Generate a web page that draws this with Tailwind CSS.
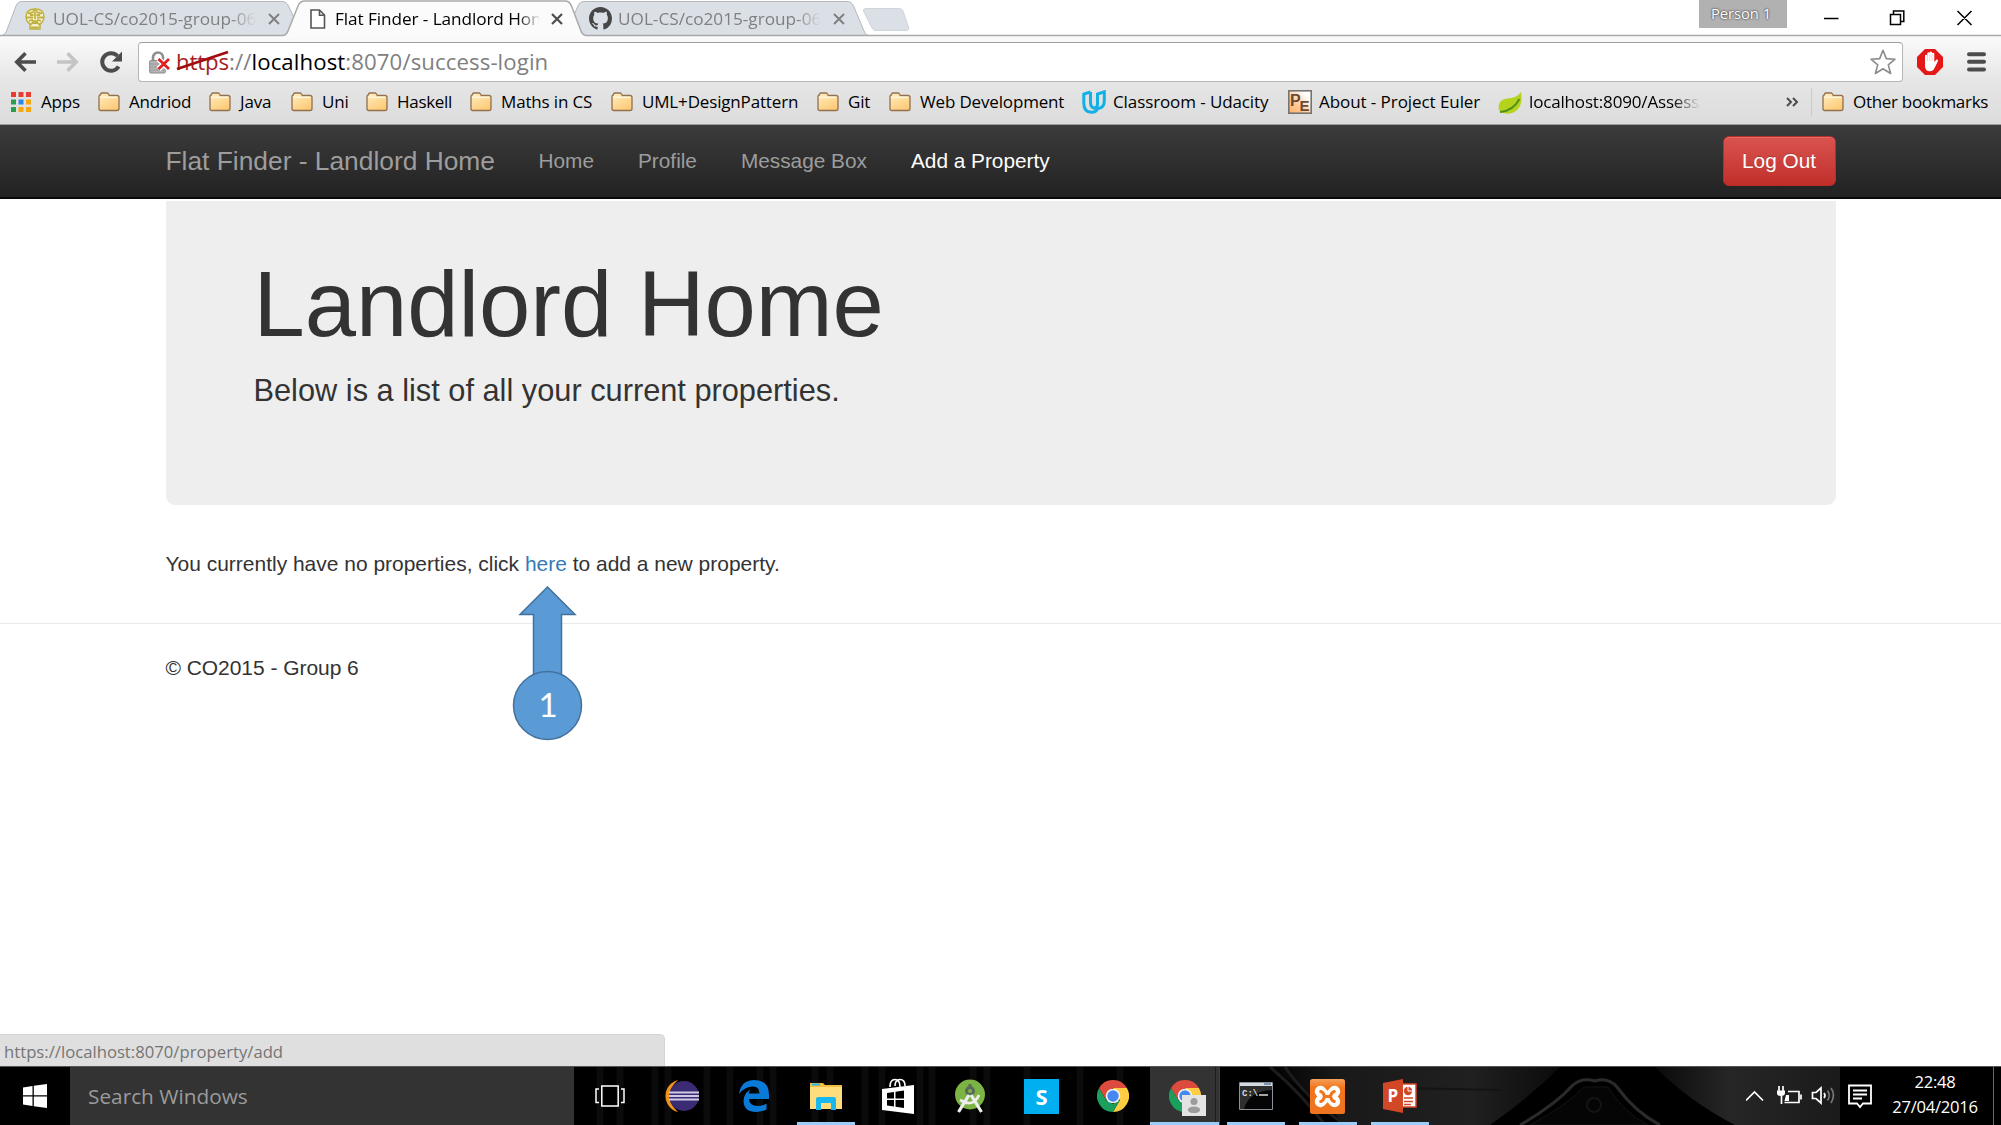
<!DOCTYPE html>
<html lang="en">
<head>
<meta charset="utf-8">
<title>Flat Finder - Landlord Home</title>
<script src="https://cdn.jsdelivr.net/npm/@tailwindcss/browser@4"></script>
</head>
<body class="flex h-[1125px] w-[2001px] flex-col overflow-hidden bg-white font-['Open_Sans',sans-serif] whitespace-nowrap text-black">

<!-- shared symbols -->
<svg class="absolute size-0">
  <linearGradient id="fold" x1="0" y1="0" x2="0.6" y2="1"><stop offset="0" stop-color="#ffefc4"/><stop offset="1" stop-color="#fdcb78"/></linearGradient>
  <linearGradient id="orange" x1="0" y1="0" x2="0" y2="1"><stop offset="0" stop-color="#f5a05a"/><stop offset=".25" stop-color="#f1751c"/><stop offset="1" stop-color="#ee7420"/></linearGradient>
  <linearGradient id="peg" x1="0" y1="1" x2="1" y2="0"><stop offset="0" stop-color="#ffb266"/><stop offset=".35" stop-color="#ffc790"/><stop offset=".8" stop-color="#fff"/></linearGradient>
  <symbol id="folder" viewBox="0 0 22 20">
    <path d="M1 4.500V16.500a2 2 0 0 0 2 2H19a2 2 0 0 0 2-2V5.500a2 2 0 0 0-2-2H11.300L10.300 1.800A1.500 1.500 0 0 0 9 1H4A1.500 1.500 0 0 0 2.600 2L2.300 3Q1 3.300 1 4.500Z" fill="url(#fold)" stroke="#93704d" stroke-width="1.300"/>
    <path d="M2.500 5.300H19.500" stroke="#fff7de" stroke-width="1.400"/>
  </symbol>
  <symbol id="chrome" viewBox="0 0 32 32">
    <path d="M16 8H29.860A16 16 0 0 1 16 32L22.930 20Z" fill="#ffcd40"/>
    <path d="M16 32A16 16 0 0 1 2.140 8L9.070 20 16 24 22.930 20Z" fill="#1a9f5c"/>
    <path d="M2.140 8A16 16 0 0 1 29.860 8H16L9.070 20Z" fill="#dd4b3e"/>
    <circle cx="16" cy="16" r="7.300" fill="#f3f3f3"/><circle cx="16" cy="16" r="5.700" fill="#4688f1"/>
  </symbol>
</svg>

<!-- tab strip -->
<header class="relative flex h-[36px] shrink-0 items-center bg-white text-[17.2px]">
  <svg class="absolute inset-0" width="2001" height="37" viewBox="0 0 2001 37" fill="none">
    <path d="M2 35.500Q5 35 6.500 31L16 6Q17.800 1.500 22 1.500H282Q286.500 1.500 288.500 6L296 22 286 35.500Z" fill="#dbe0e7" stroke="#b4b7bb"/>
    <path d="M582 35.500 573 17 578 6Q579.800 1.500 584 1.500H847Q851.500 1.500 853.500 6L864 31Q865.500 35 868 35.500Z" fill="#dbe0e7" stroke="#b4b7bb"/>
    <path d="M0 35.500H283Q286.500 35 288 31L298 6Q300 1 304.500 1H565Q569.500 1 571.500 6L581 31Q582.500 35 586 35.500H2001V37H0Z" fill="#fbfbfb"/>
    <path d="M0 35.500H283Q286.500 35 288 31L298 6Q300 1 304.500 1H565Q569.500 1 571.500 6L581 31Q582.500 35 586 35.500H2001" stroke="#a9a9a9" stroke-width="1.500"/>
    <path d="M866 8.500H899Q902 8.500 903 11L908.500 27Q909.500 30.500 906 30.500H876Q873 30.500 872 28L863.500 11Q863 8.500 866 8.500Z" fill="#dbe0e7" stroke="#cfd4da"/>
  </svg>
  <div class="relative flex w-[310px] items-center pt-[2px] pl-[25px] text-[#808080]">
    <svg width="20" height="22" viewBox="0 0 20 22" fill="none" stroke="#c0b142"><path d="M10 1Q19 1 19 9 18.500 14 15 16V21H5V16Q1.500 14 1 9 1 1 10 1Z" fill="#f6f1cc" stroke-width="1.500"/><path d="M3 5.500 7.500 4.500 10 1.500 12.500 4.500 17 5.500M1 9.500H8M12 9.500H19M5 7H8.500M11.500 7H15M4 13 7 12 10 15 13 12 16 13M5 17 10 13 15 17M6 19.500H14M10 4V11" stroke-width="1.800"/></svg>
    <span class="ml-2 w-[203px] overflow-hidden [mask-image:linear-gradient(90deg,#000_178px,transparent_203px)]">UOL-CS/co2015-group-06</span>
    <svg class="ml-3" width="12" height="12" viewBox="0 0 12 12" stroke="#808080" stroke-width="2"><path d="M1 1 11 11M11 1 1 11"/></svg>
  </div>
  <div class="relative flex w-[279px] items-center pt-[2px]">
    <svg width="16" height="20" viewBox="0 0 16 20" fill="#fff" stroke="#555" stroke-width="1.600"><path d="M1 1H9.500L14.500 6V19H1ZM9.500 1V6.300H14.500"/></svg>
    <span class="ml-[9px] w-[204px] tracking-[-0.08px] [mask-image:linear-gradient(90deg,#000_182px,transparent_206px)]">Flat Finder - Landlord Hon</span>
    <svg class="ml-[12px]" width="12" height="12" viewBox="0 0 12 12" stroke="#4d4d4d" stroke-width="2.200"><path d="M1 1 11 11M11 1 1 11"/></svg>
  </div>
  <div class="relative flex items-center pt-[2px] text-[#808080]">
    <svg width="23" height="23" viewBox="0 0 16 16" fill="#464646"><path d="M8 0C3.580 0 0 3.580 0 8c0 3.540 2.290 6.530 5.470 7.590.4.070.55-.17.55-.38 0-.19-.01-.82-.01-1.490-2.010.37-2.530-.49-2.690-.94-.09-.23-.48-.94-.82-1.130-.28-.15-.68-.52-.01-.53.63-.01 1.080.58 1.230.82.72 1.210 1.870.87 2.330.66.07-.52.28-.87.51-1.070-1.780-.2-3.640-.89-3.640-3.950 0-.87.31-1.590.82-2.150-.08-.2-.36-1.020.08-2.120 0 0 .67-.21 2.200.82.64-.18 1.320-.27 2-.27s1.360.09 2 .27c1.530-1.040 2.200-.82 2.200-.82.44 1.100.16 1.920.08 2.120.51.56.82 1.270.82 2.150 0 3.070-1.870 3.750-3.650 3.950.29.25.54.73.54 1.480 0 1.070-.01 1.930-.01 2.200 0 .21.15.46.55.38A8.010 8.010 0 0 0 16 8c0-4.420-3.580-8-8-8z"/></svg>
    <span class="ml-[6px] w-[203px] overflow-hidden [mask-image:linear-gradient(90deg,#000_178px,transparent_203px)]">UOL-CS/co2015-group-06</span>
    <svg class="ml-[12px]" width="12" height="12" viewBox="0 0 12 12" stroke="#808080" stroke-width="2"><path d="M1 1 11 11M11 1 1 11"/></svg>
  </div>
  <div class="relative ml-auto flex h-full items-start">
    <div class="flex h-[28px] w-[88px] items-center justify-center bg-[#b1b1b1] pb-[2px] pr-[4px] text-[14.7px] leading-none text-white [text-shadow:0_0_2px_#444,0_0_2px_#555]">Person 1</div>
    <svg class="ml-[37px] mt-[10px]" width="150" height="16" viewBox="0 0 150 16" fill="none" stroke="#000" stroke-width="1.500"><path d="M0 8.500H14.500M66.500 4.500H76.500V14.500H66.500ZM69.500 4V1H79.800V11.500H77M133.500 1 147.500 15M147.500 1 133.500 15"/></svg>
    <div class="w-[27px]"></div>
  </div>
</header>

<!-- toolbar and bookmarks -->
<section class="flex h-[89px] shrink-0 flex-col border-b border-[#9c9c9c] bg-linear-to-b from-[#fbfbfb] via-[#e6e6e6] to-[#dcdcdc]">
  <div class="flex items-center pt-[6px]">
    <svg class="ml-[14px]" width="22" height="20" viewBox="0 0 22 20" fill="none" stroke="#4c4c4c" stroke-width="3.600"><path d="M22 10H3M11.500 1.300 2.800 10 11.500 18.700"/></svg>
    <svg class="ml-[21px]" width="22" height="20" viewBox="0 0 22 20" fill="none" stroke="#c4c4c4" stroke-width="3.600"><path d="M0 10H19M10.500 1.300 19.200 10 10.500 18.700"/></svg>
    <svg class="ml-[20px]" width="24" height="24" viewBox="0 0 24 24" fill="none"><path d="M18.500 6A8.800 8.800 0 1 0 19.600 16.500" stroke="#4c4c4c" stroke-width="4"/><path d="M23 1.500V11.500H13Z" fill="#4c4c4c"/></svg>
    <div class="ml-[15px] flex h-[40px] w-[1765px] items-center rounded-[4px] border border-[#b5b5b5] border-t-[#9f9f9f] bg-white pl-[10px] text-[22.2px] text-[#808080]">
      <svg width="22" height="23" viewBox="0 0 22 23" fill="none"><path d="M4 10V6.500A5 5 0 0 1 14 6.500V10" stroke="#8f8f8f" stroke-width="2.600"/><rect x=".7" y="9.500" width="15.600" height="12.500" rx="1" fill="#b5b5b5" stroke="#8a8a8a"/><path d="M1 13H16M1 16H16M1 19H16" stroke="#9a9a9a"/><path d="M9.500 8 20 18M20 8 9.500 18" stroke="#fff" stroke-width="5.500"/><path d="M9.500 8 20 18M20 8 9.500 18" stroke="#e02020" stroke-width="2.800"/></svg>
      <div class="ml-[5px] flex tracking-[0.1px]"><span class="relative tracking-[-0.1px] text-[#a51d1d]">https<svg class="absolute top-[4px] left-0" width="53" height="24" viewBox="0 0 53 24"><path d="M1 20 52 3" stroke="#a00b0b" stroke-width="2.800"/></svg></span><span>://</span><span class="text-black">localhost</span><span>:8070/success-login</span></div>
      <svg class="mr-[6px] ml-auto" width="26" height="26" viewBox="0 0 26 26" fill="#fff" stroke="#8c8c8c" stroke-width="1.600" stroke-linejoin="round"><path d="M13 1.300 16.300 9.600 25 10.200 18.300 15.900 20.600 24.500 13 19.700 5.400 24.500 7.700 15.900 1 10.200 9.700 9.600Z"/></svg>
    </div>
    <svg class="ml-[14px]" width="26" height="26" viewBox="0 0 26 26"><path d="M8 0H18L26 8V18L18 26H8L0 18V8Z" fill="#e61717"/><path d="M8 14V6.500A1.200 1.200 0 0 1 10.300 6.500V4.400A1.200 1.200 0 0 1 12.700 4.400V3.300A1.200 1.200 0 0 1 15 3.300V4.500A1.200 1.200 0 0 1 17.300 4.500V13L19.500 10.500Q21.300 10 21 12L17.500 19Q16 22.300 13 22.300 8 22.300 8 17Z" fill="#fff"/><path d="M10.400 6V12M12.800 5V12M15.100 5V12" stroke="#f0bcbc" stroke-width=".7"/></svg>
    <svg class="ml-[24px]" width="19" height="20" viewBox="0 0 19 20" stroke="#4c4c4c" stroke-width="4" stroke-linecap="round"><path d="M2 2.200H17M2 9.800H17M2 17.400H17"/></svg>
  </div>
  <nav class="flex h-[40px] items-center pl-[11px] text-[17px] tracking-[-0.16px]">
    <a class="flex w-[87px] items-center gap-[10px]"><svg width="20" height="20" viewBox="0 0 20 20"><path d="M0 0H5V5H0ZM7.500 0H12.500V5H7.500ZM15 0H20V5H15Z" fill="#ea3b33"/><path d="M0 7.500H5V12.500H0ZM0 15H5V20H0Z" fill="#2a9c4d"/><path d="M7.500 7.500H12.500V12.500H7.500Z" fill="#2f86ee"/><path d="M15 7.500H20V12.500H15ZM7.500 15H12.500V20H7.500ZM15 15H20V20H15Z" fill="#f5a80f"/></svg>Apps</a>
    <a class="flex w-[111px] items-center gap-[9px]"><svg width="22" height="20"><use href="#folder"/></svg>Andriod</a>
    <a class="flex w-[82px] items-center gap-[9px]"><svg width="22" height="20"><use href="#folder"/></svg>Java</a>
    <a class="flex w-[75px] items-center gap-[9px]"><svg width="22" height="20"><use href="#folder"/></svg>Uni</a>
    <a class="flex w-[104px] items-center gap-[9px] tracking-[-0.3px]"><svg width="22" height="20"><use href="#folder"/></svg>Haskell</a>
    <a class="flex w-[141px] items-center gap-[9px]"><svg width="22" height="20"><use href="#folder"/></svg>Maths in CS</a>
    <a class="flex w-[206px] items-center gap-[9px]"><svg width="22" height="20"><use href="#folder"/></svg>UML+DesignPattern</a>
    <a class="flex w-[72px] items-center gap-[9px]"><svg width="22" height="20"><use href="#folder"/></svg>Git</a>
    <a class="flex w-[193px] items-center gap-[9px]"><svg width="22" height="20"><use href="#folder"/></svg>Web Development</a>
    <a class="flex w-[206px] items-center gap-[7px] tracking-[-0.1px]"><svg width="24" height="24" viewBox="0 0 24 24" fill="none" stroke="#12b0e6" stroke-width="3"><path d="M8.500 2 1.800 4V13Q1.800 22.300 9.500 22.300 14 22.300 15.500 19"/><path d="M8.500 2V12.500Q8.500 18.500 14.500 18.500 22.300 18.500 22.300 11V1.800L15.500 4V14Q15.500 17 13 18"/></svg>Classroom - Udacity</a>
    <a class="flex w-[210px] items-center gap-[7px] tracking-[-0.07px]"><svg width="24" height="24" viewBox="0 0 24 24"><rect x=".8" y=".8" width="22.400" height="22.400" fill="url(#peg)" stroke="#77746f" stroke-width="1.600"/><text x="2" y="15.500" font-family="Liberation Sans" font-weight="bold" font-size="16" fill="#6b4a39">P</text><text x="11.500" y="20.500" font-family="Liberation Sans" font-weight="bold" font-size="15" fill="#6b4a39">E</text></svg>About - Project Euler</a>
    <a class="flex w-[288px] items-center gap-[7px]"><svg width="24" height="23" viewBox="0 0 24 23"><path d="M1 19Q-1 9 9 7.500 19 7 23 1 25 12 20 18 14 25 3 21.500Z" fill="#b5d21c"/><path d="M2 21Q15 20 21.500 8" stroke="#4f8f1c" stroke-width="2" fill="none"/></svg><span class="[mask-image:linear-gradient(90deg,#000_143px,transparent_171px)]">localhost:8090/Assess</span></a>
    <svg width="13" height="10" viewBox="0 0 13 10" fill="none" stroke="#4c4c4c" stroke-width="2"><path d="M1 1 5 5 1 9M7 1 11 5 7 9"/></svg>
    <span class="ml-[12px] h-[28px] w-px bg-[#c3ccd3]"></span>
    <a class="ml-[10px] flex items-center gap-[9px] tracking-[-0.3px]"><svg width="22" height="20"><use href="#folder"/></svg>Other bookmarks</a>
  </nav>
</section>

<!-- page -->
<main class="flex flex-1 flex-col font-['Liberation_Sans',Arial,sans-serif] text-[20.98px] text-[#333]">
  <nav class="flex h-[74px] shrink-0 items-center border-b-2 border-[#080808] bg-linear-to-b from-[#3c3c3c] to-[#222] px-[165.5px] text-[20.8px] text-[#9d9d9d]">
    <a class="w-[373px] pt-[2px] text-[26.35px]">Flat Finder - Landlord Home</a>
    <div class="flex gap-[44px]">
      <a>Home</a><a>Profile</a><a>Message Box</a><a class="text-white">Add a Property</a>
    </div>
    <button class="ml-auto h-[50px] w-[113px] rounded-[6px] border border-[#b92c28] bg-linear-to-b from-[#d9534f] to-[#c12e2a] text-white shadow-[inset_0_1px_0_rgba(255,255,255,0.15)] [text-shadow:0_-1px_0_rgba(0,0,0,0.2)]">Log Out</button>
  </nav>
  <section class="mx-[165.5px] mt-[2px] h-[304px] shrink-0 rounded-b-[9px] bg-[#eee] pl-[88px] pt-[53px]">
    <h1 class="text-[92.2px] leading-[102px]">Landlord Home</h1>
    <p class="mt-[14px] text-[30.75px] leading-[42px]">Below is a list of all your current properties.</p>
  </section>
  <p class="mt-[44px] ml-[165.5px] leading-[30px]">You currently have no properties, click <a class="text-[#337ab7]">here</a> to add a new property.</p>
  <hr class="mt-[44px] border-t-[1.500px] border-[#eaeaea]">
  <footer class="mt-[29px] ml-[165.5px] leading-[30px] tracking-[-0.03px]">© CO2015 - Group 6</footer>
  <div class="mt-auto flex h-[32px] w-[665px] items-center rounded-tr-[5px] border-t border-r border-[#d5d5d5] bg-[#dfdfdf] pt-[2px] pl-[4px] font-['Open_Sans',sans-serif] text-[16.7px] text-[#757575]">https://localhost:8070/property/add</div>
</main>

<!-- step callout laid over the page -->
<div class="absolute top-[585px] left-[512px] h-[157px] w-[72px]">
  <svg width="72" height="157" viewBox="0 0 72 157" fill="#5b9bd5" stroke="#41719c" stroke-width="1.500"><path d="M35.500 2 63 29.500H49.500V95H21.500V29.500H8Z"/><circle cx="35.500" cy="120.500" r="34"/></svg>
  <span class="absolute inset-x-0 top-[98px] text-center font-['Lato',sans-serif] text-[33px] leading-[42px] text-white">1</span>
</div>

<!-- taskbar -->
<footer class="relative flex h-[59px] shrink-0 items-center border-t border-[#555] bg-black">
  <svg class="absolute inset-0" width="2001" height="58" viewBox="0 0 2001 58" preserveAspectRatio="none" fill="none">
    <defs><linearGradient id="w1"><stop offset="0" stop-color="#000"/><stop offset=".25" stop-color="#191919"/><stop offset=".7" stop-color="#202020"/><stop offset="1" stop-color="#0b0b0b"/></linearGradient>
    <linearGradient id="w2"><stop offset="0" stop-color="#0a0a0a"/><stop offset=".4" stop-color="#262626"/><stop offset="1" stop-color="#1a1a1a"/></linearGradient></defs>
    <path d="M600 0V58M620 0V58M655 0V58M668 0V58M707 0V58M730 0V58M760 0V58M773 0V58M815 0V58M830 0V58M865 0V58M882 0V58M920 0V58M932 0V58M973 0V58M987 0V58M1027 0V58M1080 0V58M1120 0V58" stroke="#0b0b0b" stroke-width="7"/>
    <path d="M1265 0H1560Q1530 30 1490 58H1345Q1310 20 1265 0Z" fill="url(#w1)"/>
    <path d="M1270 0Q1300 25 1325 58M1285 0Q1305 30 1345 58" stroke="#1c1c1c" stroke-width="3"/>
    <path d="M1400 21 1500 23" stroke="#141414" stroke-width="2"/>
    <path d="M1520 58Q1555 38 1573 18 1582 10 1595 14 1608 10 1617 20 1635 45 1660 58" stroke="#2b2b2b" stroke-width="3"/>
    <path d="M1530 58Q1567 38 1584 20H1608Q1623 45 1648 58Z" fill="#050505" stroke="#141414"/>
    <circle cx="1594" cy="38" r="7" stroke="#141414" stroke-width="2"/>
    <path d="M1655 0H1843V58H1735Q1690 35 1655 0Z" fill="url(#w2)"/>
  </svg>
  <div class="relative flex w-[70px] justify-center"><svg width="24" height="24" viewBox="0 0 24 24" fill="#fff"><path d="M0 3.500 9.500 2V11.300H0ZM10.800 1.800 24 0V11.300H10.800ZM0 12.600H9.500V22L0 20.500ZM10.800 12.600H24V24L10.800 22.200Z"/></svg></div>
  <div class="relative flex h-[58px] w-[504px] items-center bg-[#333] pt-[2px] pl-[18px] text-[20.8px] text-[#9b9b9b]">Search Windows</div>
  <div class="relative flex h-full">
    <div class="flex w-[71.8px] items-center justify-center"><svg width="30" height="22" viewBox="0 0 30 22" fill="none" stroke="#fff" stroke-width="1.500"><path d="M6.800 1H23.200V21H6.800ZM4 4H1V17.500H4M26 4H29V17.500H26"/></svg></div>
    <div class="flex w-[71.8px] items-center justify-center"><svg width="36" height="34" viewBox="0 0 36 34"><path d="M14 1A16.500 16.500 0 0 0 14 33Q6 26 6 17T14 1Z" fill="#f0921e"/><circle cx="20" cy="17" r="15" fill="#3a2b72"/><path d="M5 13.500H35M5 17H35M5 20.500H35" stroke="#cfcbe6" stroke-width="2.200"/></svg></div>
    <div class="flex w-[72.600px] items-center justify-center pl-px"><svg width="30" height="32" viewBox="0 0 30 32"><path d="M0 14Q2 0 15.500 0 30 0.500 30 15V19H10Q10.500 26 18.500 26 23.500 26 27.500 23.500V29.500Q22.500 32 17 32 5 32 4.500 21 4.500 13.500 11.500 9.500 10 11.500 9.700 13.500H20.500Q20.500 6.500 14 6.500 5.500 6.500 0 14Z" fill="#0a7ad9"/></svg></div>
    <div class="relative flex w-[71.8px] items-center justify-center"><svg width="32" height="27" viewBox="0 0 32 27"><path d="M0 0H13L15 2H32V26H0Z" fill="#f0bd45"/><path d="M0 4H32V26H0Z" fill="#ffdc7c"/><path d="M2 1.500H10" stroke="#2bb7ea" stroke-width="2"/><path d="M6 27V16Q6 14 8 14H24Q26 14 26 16V27H21V20H11V27Z" fill="#18b7f0"/></svg><span class="absolute bottom-0 h-[3px] w-[58px] bg-[#9ccdf8]"></span></div>
    <div class="flex w-[71.8px] items-center justify-center"><svg width="32" height="36" viewBox="0 0 32 36"><path d="M8 9Q8 1.500 13 1.500T18 9M13 8Q13 1.500 18 1.500T23 8" stroke="#fff" stroke-width="1.600" fill="none"/><path d="M0 11 32 7V36L0 32Z" fill="#fff"/><path d="M5 15 12 14V20.500H5ZM13.500 13.800 22 12.500V20.500H13.500ZM5 22H12V28.500L5 27.500ZM13.500 22H22V30L13.500 28.800Z" fill="#000"/></svg></div>
    <div class="flex w-[71.8px] items-center justify-center"><svg width="30" height="34" viewBox="0 0 30 34" fill="none"><circle cx="15" cy="15.500" r="15" fill="#7cb444"/><circle cx="15" cy="12" r="3.500" stroke="#5a6a5a" stroke-width="3"/><path d="M15 5V8" stroke="#5a6a5a" stroke-width="3"/><path d="M14 16 3.500 33M16 16 26.500 33" stroke="#eee" stroke-width="3.200"/><path d="M5 21Q18 29 24 16" stroke="#eee" stroke-width="2.800"/></svg></div>
    <div class="flex w-[71.8px] items-center justify-center"><div class="flex size-[35px] items-center justify-center bg-[#00aff0] text-[22px] leading-none font-bold text-white">S</div></div>
    <div class="flex w-[71.8px] items-center justify-center"><svg width="32" height="32"><use href="#chrome"/></svg></div>
    <div class="relative ml-px flex w-[70px] items-center justify-center border-r border-[#3c3c3c] bg-[#333]"><svg width="32" height="32"><use href="#chrome"/></svg><svg class="absolute top-[28px] left-[32px]" width="24" height="21" viewBox="0 0 24 21"><path d="M0 0H24V21H0Z" fill="#e3e3e3"/><circle cx="12" cy="6.500" r="3.500" fill="#9c9c9c"/><ellipse cx="12" cy="14.800" rx="6.200" ry="3.300" fill="#9c9c9c"/></svg><span class="absolute top-0 right-[3px] h-full w-px bg-[#1c1c1c]"></span><span class="absolute bottom-0 left-0 h-[3px] w-full bg-[#9ccdf8]"></span></div>
    <div class="relative flex w-[71.8px] items-center justify-center"><svg width="34" height="28" viewBox="0 0 34 28"><path d="M.5.500H33.500V27.500H.5Z" fill="#050505" stroke="#8c9299"/><path d="M1 4H33V8Q10 9 5 27H1Z" fill="#2c2e30"/><path d="M1 1H33V4H1Z" fill="#d5dbe1"/><path d="M25 2H32" stroke="#5f7e9d" stroke-width="1.500"/><text x="3" y="14" font-family="Liberation Mono" font-weight="bold" font-size="9" fill="#ddd">C:\</text><path d="M20 13H29" stroke="#ddd" stroke-width="1.500"/></svg><span class="absolute bottom-0 h-[3px] w-[58px] bg-[#9ccdf8]"></span></div>
    <div class="relative flex w-[71.8px] items-center justify-center"><svg width="35" height="35" viewBox="0 0 35 35" fill="none" stroke-linecap="round" stroke-linejoin="round"><rect width="35" height="35" rx="2.500" fill="url(#orange)"/><path d="M10.500 12.500 15 17.500 10.500 22.500M24.500 12.500 20 17.500 24.500 22.500M15 17.500H20" stroke="#fff" stroke-width="11.500"/><path d="M10.800 12.500Q13.500 13 14.500 17.500 13.500 22 10.800 22.500M24.200 12.500Q21.500 13 20.500 17.500 21.500 22 24.200 22.500M15 17.500H20" stroke="#f1751c" stroke-width="3.200"/></svg><span class="absolute bottom-0 h-[3px] w-[58px] bg-[#9ccdf8]"></span></div>
    <div class="relative flex w-[71.8px] items-center justify-center"><svg width="34" height="34" viewBox="0 0 34 34"><path d="M18 5H33V28H18Z" fill="#fff" stroke="#d24726" stroke-width="1.500"/><path d="M21 19H30M21 22.500H30M21 25.500H28" stroke="#d24726" stroke-width="1.500"/><circle cx="25" cy="12" r="4.200" fill="#d24726"/><path d="M25 12V7M25 12H30" stroke="#fff"/><path d="M0 4 20 0V34L0 30Z" fill="#d24726"/><text x="4.500" y="23" font-family="Open Sans" font-weight="bold" font-size="17" fill="#fff">P</text></svg><span class="absolute bottom-0 h-[3px] w-[58px] bg-[#9ccdf8]"></span></div>
  </div>
  <div class="relative ml-auto flex h-full items-center">
    <svg class="mr-[2px]" width="92" height="24" viewBox="0 0 92 24" fill="none" stroke="#fff" stroke-width="1.700"><path d="M0 16.500 8.500 8 17 16.500"/><path d="M42 7.500H53V18.500H38.500M55 10.500V15.500M33 2V7M37 2V7M35.500 12V20"/><path d="M31 6.500H39V9Q39 12 35 12T31 9Z" fill="#fff" stroke="none"/><path d="M40 11H43V17H38.500Z" fill="#fff" stroke="none"/><path d="M66.500 8.500H70L75 4V19L70 14.500H66.500ZM78 9Q80 11.500 78 14"/><path d="M81.500 6.500Q85 11.500 81.500 16.500M85 4Q90 11 85 19" stroke="#777"/></svg>
    <div class="flex h-full items-center bg-black pl-[8px]">
      <svg width="24" height="25" viewBox="0 0 24 25" fill="none" stroke="#fff" stroke-width="1.800"><path d="M1 1.500H23V19.500H15L12 23 9 19.500H1ZM5 6.500H19M5 10.500H19M5 14.500H14"/></svg>
      <div class="ml-[9px] flex w-[108px] flex-col items-center pb-[4px] text-[16.6px] leading-[25px] tracking-[-0.25px] text-white"><span>22:48</span><span>27/04/2016</span></div>
      <span class="ml-[4px] h-full w-px bg-[#666]"></span><span class="w-[7px]"></span>
    </div>
  </div>
</footer>
</body>
</html>
